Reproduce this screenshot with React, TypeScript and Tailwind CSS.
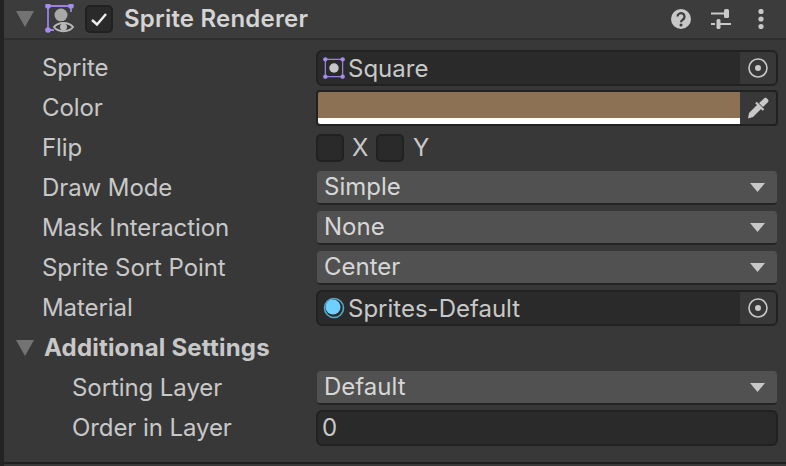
const font = '[font-family:Inter,"Liberation_Sans",sans-serif]';

function Tri({ className }: { className: string }) {
  return (
    <svg width="18" height="16" viewBox="0 0 18 16" className={className}>
      <path d="M0 0H18L9 16Z" fill="#737373" />
    </svg>
  );
}

function SpriteGlyph({ size, children }: { size: number; children?: React.ReactNode }) {
  return (
    <svg width={size} height={size} viewBox="0 0 28 28" className="shrink-0">
      <rect x="3" y="3" width="22" height="22" fill="none" stroke="#9c80e8" strokeWidth="1.6" />
      {[3, 25].map((x) => [3, 25].map((y) => <circle key={`${x}-${y}`} cx={x} cy={y} r="2.8" fill="#a68cf0" />))}
      {children}
    </svg>
  );
}

function TargetIcon() {
  return (
    <svg width="20" height="20" viewBox="0 0 20 20">
      <circle cx="10" cy="10" r="9" fill="none" stroke="#c8c8c8" strokeWidth="1.6" />
      <circle cx="10" cy="10" r="3" fill="#c8c8c8" />
    </svg>
  );
}

function Row({ label, indent, children }: { label: string; indent?: boolean; children: React.ReactNode }) {
  return (
    <div className="flex h-10 items-center">
      <div className={`w-[312px] shrink-0 text-[24px] tracking-[-0.08px] text-[#c8c8c8] ${indent ? 'pl-[68px]' : 'pl-[38px]'}`}>{label}</div>
      <div className="min-w-0 flex-1">{children}</div>
    </div>
  );
}

function ObjectField({ icon, text }: { icon: React.ReactNode; text: string }) {
  return (
    <div className="flex h-9 items-stretch overflow-hidden rounded-[6px] border-2 border-[#212121] bg-[#2a2a2a]">
      <div className="flex min-w-0 flex-1 items-center gap-[3px] pl-[5px] text-[24px] text-[#c8c8c8]">
        {icon}
        <span className="pt-[2px]">{text}</span>
      </div>
      <div className="flex w-9 items-center justify-center bg-[#383838]">
        <TargetIcon />
      </div>
    </div>
  );
}

function Dropdown({ text }: { text: string }) {
  return (
    <div className="mx-px flex h-[34px] items-center justify-between rounded-[4px] border-b-2 border-[#242424] bg-[#515151] pl-[7px] pr-[12px] text-[24px] text-[#d6d6d6]">
      <span>{text}</span>
      <svg width="15" height="9" viewBox="0 0 15 9">
        <path d="M0 0H15L7.5 9Z" fill="#c8c8c8" />
      </svg>
    </div>
  );
}

function Check({ children }: { children?: React.ReactNode }) {
  return (
    <div className="flex h-7 w-7 shrink-0 items-center justify-center rounded-[5px] border-2 border-[#212121] bg-[#2a2a2a]">
      {children}
    </div>
  );
}

export default function App() {
  return (
    <div className={`flex h-[466px] w-[786px] overflow-hidden bg-[#383838] ${font}`}>
      <div className="w-1 shrink-0 bg-[#232323]" />
      <div className="flex min-w-0 flex-1 flex-col">
        <div className="flex h-10 shrink-0 items-center border-b-2 border-[#2f2f2f] bg-[#3c3c3c] pr-[16px]">
          <Tri className="ml-[12px] shrink-0" />
          <svg width="30" height="30" viewBox="0 0 30 30" className="ml-[11px] shrink-0">
            <path d="M26 8V2H3V26H9" fill="none" stroke="#9c80e8" strokeWidth="1.8" />
            <circle cx="3" cy="2" r="2.800" fill="#a68cf0" />
            <circle cx="26" cy="2" r="2.800" fill="#a68cf0" />
            <circle cx="3" cy="26" r="2.800" fill="#a68cf0" />
            <circle cx="16" cy="11" r="6.500" fill="#a8a8a8" />
            <path d="M8 23c4.500-6.500 16-6.500 21 0-5 6.500-16.500 6.500-21 0Z" fill="#3c3c3c" stroke="#3c3c3c" strokeWidth="2" />
            <path d="M9 23c4-5.500 15-5.500 19 0-4 5.500-15 5.500-19 0Z" fill="#3c3c3c" stroke="#b8b8b8" strokeWidth="2" />
            <circle cx="18.500" cy="23" r="3.500" fill="#b8b8b8" />
          </svg>
          <div className="ml-[10px]">
            <Check>
              <svg width="18" height="15" viewBox="0 0 18 15">
                <path d="M2 8L7 12.500L16 2" fill="none" stroke="#f0f0f0" strokeWidth="2.400" />
              </svg>
            </Check>
          </div>
          <span className="ml-[11px] flex-1 text-[24px] font-semibold tracking-[0.2px] text-[#d4d4d4]">Sprite Renderer</span>
          <svg width="20" height="20" viewBox="0 0 20 20" className="mr-[20px]">
            <circle cx="10" cy="10" r="10" fill="#c8c8c8" />
            <path d="M6.500 7.500a3.500 3.500 0 1 1 5.500 3c-1.300.9-2 1.300-2 2.800" fill="none" stroke="#3c3c3c" strokeWidth="2.200" />
            <circle cx="10" cy="16" r="1.500" fill="#3c3c3c" />
          </svg>
          <svg width="20" height="20" viewBox="0 0 20 20" className="mr-[27px]">
            <path d="M0 4.500H13M0 15H4M7 15H20" stroke="#c8c8c8" strokeWidth="2" />
            <rect x="13" y="0" width="5" height="9" rx="1.500" fill="#c8c8c8" />
            <rect x="5.500" y="10" width="4" height="10" rx="1.500" fill="#c8c8c8" />
          </svg>
          <svg width="6" height="20" viewBox="0 0 6 20" className="mr-[6px]">
            <circle cx="3" cy="2.500" r="2.600" fill="#c8c8c8" />
            <circle cx="3" cy="10" r="2.600" fill="#c8c8c8" />
            <circle cx="3" cy="17.500" r="2.600" fill="#c8c8c8" />
          </svg>
        </div>
        <div className="flex flex-col pr-2 pt-[8px]">
          <Row label="Sprite">
            <ObjectField
              text="Square"
              icon={
                <SpriteGlyph size={22}>
                  <circle cx="14" cy="14" r="6" fill="#c8c8c8" />
                </SpriteGlyph>
              }
            />
          </Row>
          <Row label="Color">
            <div className="flex h-9 overflow-hidden rounded-[4px] border-2 border-[#212121] bg-[#383838]">
              <div className="flex flex-1 flex-col">
                <div className="flex-1 bg-[#8d7154]" />
                <div className="h-[6px] bg-white" />
              </div>
              <div className="flex w-9 items-center justify-center">
                <svg width="24" height="24" viewBox="0 0 24 24">
                  <path d="M2 22.500L3 17L12 8L16 12L7 21Z" fill="#c8c8c8" />
                  <path d="M10 6.500L17.500 14" stroke="#c8c8c8" strokeWidth="2.200" />
                  <path d="M13 7L17 3.500C19 1 20 1.500 21.500 3C23 4.500 23 5.500 20.500 7.500L17 11Z" fill="#c8c8c8" />
                </svg>
              </div>
            </div>
          </Row>
          <Row label="Flip">
            <div className="flex items-center text-[24px] text-[#c8c8c8]">
              <Check />
              <span className="ml-[8px] w-[16px]">X</span>
              <div className="ml-[8px]">
                <Check />
              </div>
              <span className="ml-[9px]">Y</span>
            </div>
          </Row>
          <Row label="Draw Mode">
            <Dropdown text="Simple" />
          </Row>
          <Row label="Mask Interaction">
            <Dropdown text="None" />
          </Row>
          <Row label="Sprite Sort Point">
            <Dropdown text="Center" />
          </Row>
          <Row label="Material">
            <ObjectField
              text="Sprites-Default"
              icon={
                <svg width="22" height="22" viewBox="0 0 22 22" className="shrink-0">
                  <circle cx="11" cy="11" r="9.500" fill="none" stroke="#53a8c8" strokeWidth="1.600" />
                  <circle cx="10" cy="10" r="7.500" fill="#6fd0ff" />
                </svg>
              }
            />
          </Row>
          <div className="flex h-10 items-center">
            <Tri className="ml-[12px] shrink-0" />
            <span className="ml-[10px] text-[24px] font-bold tracking-[0.2px] text-[#c8c8c8]">Additional Settings</span>
          </div>
          <Row label="Sorting Layer" indent>
            <Dropdown text="Default" />
          </Row>
          <Row label="Order in Layer" indent>
            <div className="flex h-9 items-center rounded-[6px] border-2 border-[#212121] bg-[#2a2a2a] pl-[4px] text-[24px] text-[#c8c8c8]">
              0
            </div>
          </Row>
        </div>
        <div className="mt-auto mb-[2px] h-[2px] bg-[#1f1f1f]" />
      </div>
    </div>
  );
}
